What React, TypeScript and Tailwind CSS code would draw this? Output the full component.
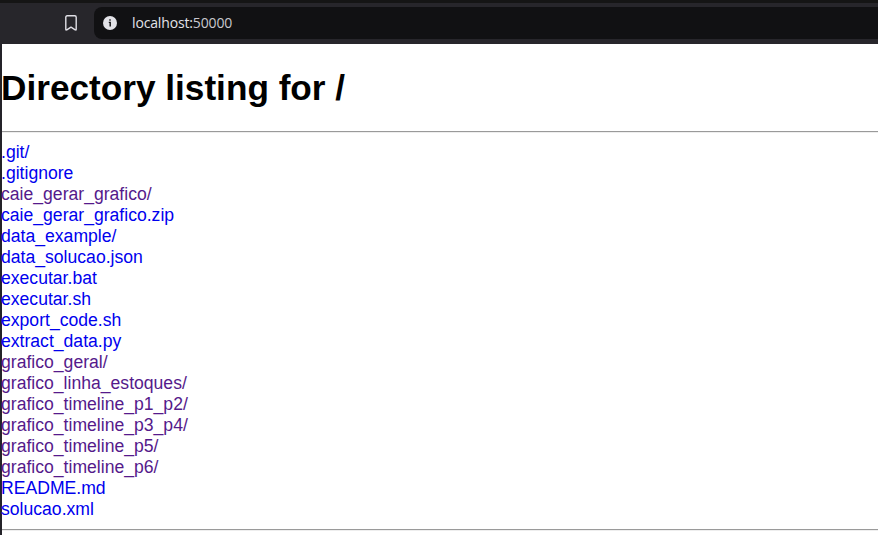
const entries: [string, boolean][] = [
  ['.git/', false], ['.gitignore', false], ['caie_gerar_grafico/', true], ['caie_gerar_grafico.zip', false],
  ['data_example/', false], ['data_solucao.json', false], ['executar.bat', false], ['executar.sh', false],
  ['export_code.sh', false], ['extract_data.py', false], ['grafico_geral/', true], ['grafico_linha_estoques/', true],
  ['grafico_timeline_p1_p2/', true], ['grafico_timeline_p3_p4/', true], ['grafico_timeline_p5/', true],
  ['grafico_timeline_p6/', true], ['README.md', false], ['solucao.xml', false],
];

export default function App() {
  return (
    <div className="flex h-[535px] w-[878px] flex-col overflow-hidden bg-[#242329]">
      <header className="flex h-[44px] shrink-0 items-center border-t-[3px] border-[#151515] bg-[#27262b] pb-[1px]">
        <svg className="ml-[65px] h-4 w-3" viewBox="0 0 12 16" fill="none" stroke="#e0dfe6" strokeWidth="1.4" strokeLinejoin="round">
          <path d="M.8 2.2Q.8 .8 2.2 .8H9.8Q11.2 .8 11.2 2.2V14.3Q11.2 15.5 10.2 14.8L6 12.1L1.8 14.8Q.8 15.5 .8 14.3Z" />
        </svg>
        <div className="ml-[17px] flex h-8 flex-1 items-center rounded-l-lg bg-[#111113] pl-[9px]">
          <svg className="h-[14px] w-[14px]" viewBox="0 0 14 14">
            <circle cx="7" cy="7" r="7" fill="#e3e3e8" />
            <path d="M5.8 6.4H7.2V10.5M7 3.3V4.8" fill="none" stroke="#111113" strokeWidth="1.4" />
          </svg>
          <span className="ml-[15px] font-['Open_Sans','Noto_Sans',sans-serif] text-[14px] leading-5 tracking-[-0.15px] text-[#e3e3e8]">localhost:<span className="text-[#c9c8ce]">50000</span></span>
        </div>
      </header>
      <main className="ml-[2px] flex-1 bg-white font-['Liberation_Sans',Arial,sans-serif] text-black">
        <h1 className="-ml-[1px] mt-[23px] text-[35.2px] leading-[41px] font-bold">Directory listing for /</h1>
        <hr className="mt-[23px] h-[2px] border-t border-b border-t-[#9a9a9a] border-b-[#eeeeee]" />
        <ul className="-ml-[1px] mt-[9px] text-[17.6px] leading-[21px]">
          {entries.map(([name, visited]) => (
            <li key={name}><a className={visited ? 'text-[#551a8b]' : 'text-[#0000ee]'}>{name}</a></li>
          ))}
        </ul>
        <hr className="mt-[9px] h-[2px] border-t border-b border-t-[#9a9a9a] border-b-[#eeeeee]" />
      </main>
    </div>
  );
}
